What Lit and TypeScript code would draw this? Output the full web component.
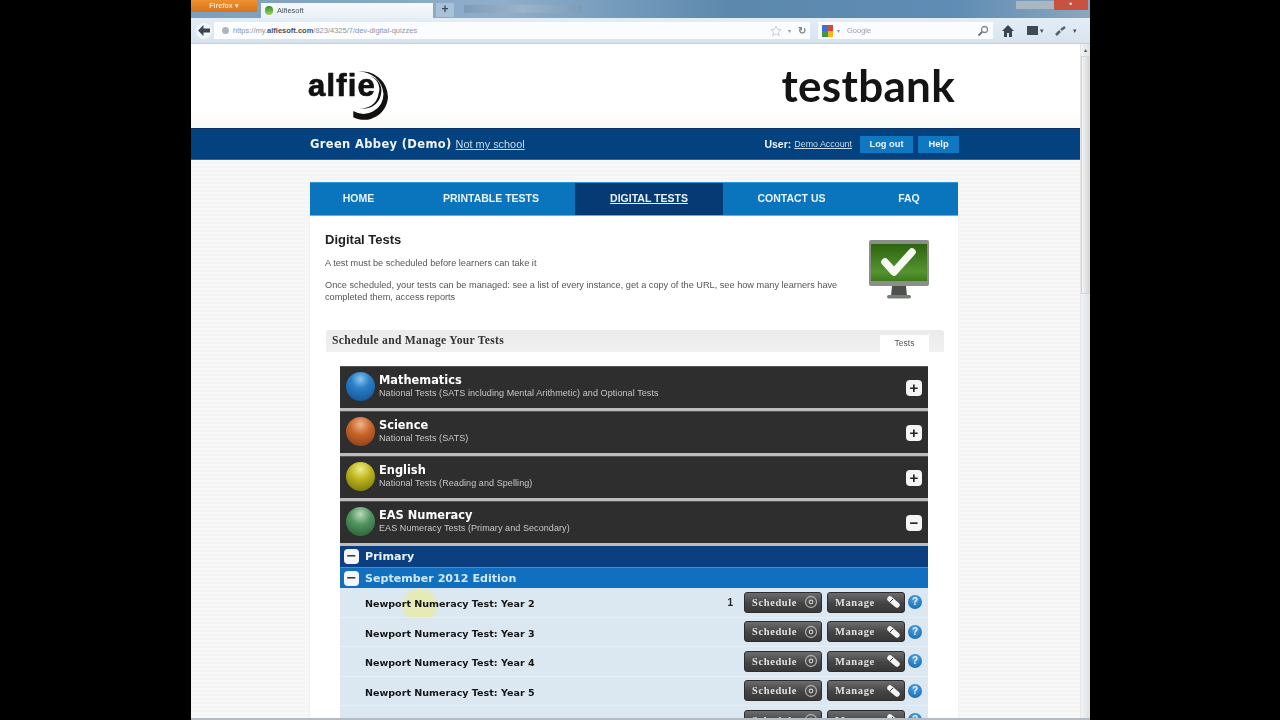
import { LitElement, html, css, svg } from "lit";
import { customElement } from "lit/decorators.js";

const subjects = [
  { name: "Mathematics", sub: "National Tests (SATS including Mental Arithmetic) and Optional Tests", cls: "blue", open: false },
  { name: "Science", sub: "National Tests (SATS)", cls: "orange", open: false },
  { name: "English", sub: "National Tests (Reading and Spelling)", cls: "yellow", open: false },
  { name: "EAS Numeracy", sub: "EAS Numeracy Tests (Primary and Secondary)", cls: "green", open: true },
];
const tests = [2, 3, 4, 5, 6];

const monitor = svg`<svg width="62" height="62" viewBox="0 0 62 62">
  <defs><linearGradient id="scr" x1="0" y1="0" x2="0" y2="1"><stop offset="0" stop-color="#2c6410"/><stop offset=".75" stop-color="#55932f"/><stop offset="1" stop-color="#3c7a1e"/></linearGradient></defs>
  <rect x="1" y="1" width="60" height="46" rx="2" fill="#8b9087"/>
  <rect x="3" y="5" width="56" height="37" fill="url(#scr)"/>
  <path d="M17 23 L26 33 L44 13" fill="none" stroke="#f6f8f2" stroke-width="7.500" stroke-linejoin="round" stroke-linecap="round"/>
  <path d="M24 47h14l1 10H23z" fill="#4c504c"/>
  <rect x="19" y="56" width="24" height="3.500" rx="1.700" fill="#777b76"/>
</svg>`;

const logoSwirl = svg`<svg width="84" height="56" viewBox="0 -6 84 56">
  <text x="0" y="26" font-family="'Liberation Sans',sans-serif" font-weight="700" font-size="31" letter-spacing="1.200" fill="#111" stroke="#111" stroke-width=".7">alfie</text>
  <path d="M50 1.700 A26 26 0 0 1 80 27 A24 24 0 0 1 45.300 47.300 L45.300 41 A20 20 0 0 0 75.500 24 A24 24 0 0 0 50 1.700Z" fill="#111"/>
  <path d="M62 6 A15 15 0 0 1 73 24 A17 17 0 0 1 50 37.500 A16 16 0 0 0 70.500 24 A14 14 0 0 0 62 6Z" fill="#111"/>
</svg>`;

const gear = svg`<svg width="14" height="14" viewBox="0 0 14 14"><circle cx="7" cy="7" r="5.500" fill="none" stroke="#aaa" stroke-width="1.300"/><circle cx="7" cy="7" r="1.800" fill="none" stroke="#ccc" stroke-width="1.200"/></svg>`;
const wrench = svg`<svg width="16" height="14" viewBox="0 0 16 14"><path d="M5 4 L12 10" stroke="#f4f4f4" stroke-width="5.500" stroke-linecap="round"/><path d="M8 4L5 7" stroke="#333" stroke-width="1"/></svg>`;
const back = svg`<svg width="12" height="11" viewBox="0 0 12 11"><path d="M5.500 0L0 5.500 5.500 11V7.500H12v-4H5.500z" fill="#3c4650"/></svg>`;
const home = svg`<svg width="12" height="12" viewBox="0 0 12 12"><path d="M6 0L0 6h2v6h3V8h2v4h3V6h2z" fill="#3b4651"/></svg>`;
const star = svg`<svg width="12" height="12" viewBox="0 0 12 12"><path d="M6 1l1.500 3.400 3.700.3-2.800 2.400.9 3.600L6 8.800 2.700 10.700l.9-3.600L.8 4.700l3.700-.3z" fill="none" stroke="#c8ced4"/></svg>`;
const glass = svg`<svg width="12" height="12" viewBox="0 0 12 12"><circle cx="7.500" cy="4.500" r="3" fill="none" stroke="#7f8a94" stroke-width="1.300"/><path d="M5 7L1.500 10.500" stroke="#6c7780" stroke-width="2"/></svg>`;
const ext = svg`<svg width="12" height="10" viewBox="0 0 12 10"><path d="M1 9L5 5M6 4l4-3" stroke="#56626d" stroke-width="2.500"/></svg>`;

@customElement("app-root")
export class AppRoot extends LitElement {
  static styles = css`
    :host { display: block; width: 1280px; height: 720px; background: #000; overflow: hidden; font-family: "Liberation Sans", Arial, sans-serif; color: #222; }
    .browser { width: 899px; height: 720px; margin-left: 191px; display: flex; flex-direction: column; background: #fff; filter: blur(.45px); }
    .titlebar { height: 18px; flex: none; display: flex; background: linear-gradient(90deg, #7d9ebc 0%, #8eaecb 35%, #5c88ad 60%, #5f8cb4 85%, #8ba7bd 100%); }
    .ff { width: 66px; height: 12px; background: linear-gradient(#f0912f, #d8741c); color: #f6dfc4; font-size: 7px; font-weight: 700; text-align: center; line-height: 11px; }
    .tab { width: 172px; height: 15px; margin: 3px 0 0 4px; background: linear-gradient(#f6f9fb, #e9f0f6); display: flex; align-items: center; gap: 4px; padding-left: 4px; box-sizing: border-box; font-size: 7.500px; color: #45505a; }
    .fav { width: 8px; height: 9px; border-radius: 4px; background: linear-gradient(#2e8f3a, #a4cf52); }
    .plus { width: 18px; height: 14px; margin: 3px 0 0 3px; background: #a9c1d6; color: #3d4c59; font-size: 12px; font-weight: 700; line-height: 13px; text-align: center; }
    .ghost { margin: 5px 0 0 10px; width: 118px; height: 8px; background: linear-gradient(90deg, #7e9cb8, #9db4c9, #7e9cb8); }
    .spacer { flex: 1; }
    .winctl { width: 34px; height: 10px; background: #c8523f; margin-right: 2px; color: #fff; font-size: 8px; line-height: 8px; text-align: center; }
    .winmin { width: 38px; height: 8px; margin-top: 1px; background: #a9b7c2; }
    .toolbar { height: 26px; flex: none; display: flex; align-items: center; background: linear-gradient(#e3edf6, #d7e4f0); border-bottom: 1px solid #c3d0dc; box-sizing: border-box; padding-left: 5px; }
    .backbtn { width: 16px; height: 16px; border-radius: 50%; background: #f3f6f9; display: flex; align-items: center; justify-content: center; flex: none; }
    .url { width: 596px; height: 17px; margin-left: 2px; background: #fbfcfd; display: flex; align-items: center; padding: 0 4px 0 8px; box-sizing: border-box; font-size: 7.500px; color: #8f979e; gap: 4px; }
    .url b { color: #4a5159; font-weight: 700; }
    .globe { width: 7px; height: 7px; border-radius: 50%; background: #aeb6bd; flex: none; }
    .urltext { flex: 1; }
    .arrow { color: #8c97a1; font-size: 6px; margin-left: 2px; }
    .reload { color: #7b8792; font-size: 10px; font-weight: 700; margin-left: 3px; }
    .search { width: 175px; height: 17px; margin-left: 8px; background: #fbfcfd; display: flex; align-items: center; padding: 0 4px; box-sizing: border-box; font-size: 7.500px; color: #9aa1a8; gap: 4px; }
    .g { width: 11px; height: 12px; background: conic-gradient(#d9453a 0 25%, #f1b822 0 50%, #3c9a46 0 75%, #3f6fd0 0); flex: none; }
    .search .arrow { margin: 0 3px 0 0; }
    .tools { display: flex; align-items: center; padding-left: 9px; color: #45505a; font-size: 7px; }
    .box { width: 11px; height: 9px; background: #3f4a55; margin-left: 13px; }
    .tools .tar { margin-left: 2px; }
    .tools .ex { margin-left: 11px; display: flex; }
    .tools .tar2 { margin-left: 6px; }
    .pagewrap { flex: 1; display: flex; min-height: 0; }
    .page { width: 889px; background: repeating-linear-gradient(0deg, #f8f8f8 0 2px, #f5f5f5 2px 4px); overflow: hidden; }
    .sb { width: 10px; flex: none; background: linear-gradient(90deg, #f0f2f4, #dfe2e5); border-left: 1px solid #e6e6e6; box-sizing: border-box; font-size: 6px; line-height: 12px; text-align: center; color: #555; }
    .thumb { height: 236px; background: linear-gradient(90deg, #f3f4f5, #d5d7da); border: 1px solid #d3d5d8; }
    .status { height: 2px; flex: none; background: #b4bbc2; }
    .head { height: 84px; background: linear-gradient(#fff 80%, #f8f8f6); padding: 0 125px 0 117px; display: flex; justify-content: space-between; align-items: flex-start; box-sizing: border-box; }
    .swirl { display: block; margin-top: 20px; }
    .testbank { font-family: "Lato", sans-serif; font-size: 44px; font-weight: 700; color: #141414; letter-spacing: .3px; line-height: 1; margin: 19px 0 0 0; }
    .bar { height: 32px; background: #04427f; border-top: 1px solid #0a3566; border-bottom: 1px solid #2a6aa6; box-sizing: border-box; display: flex; align-items: center; padding: 0 121px 0 119px; color: #eef4f8; }
    .school { font-weight: 700; letter-spacing: .35px; font-family: "DejaVu Sans", sans-serif; font-size: 11.500px; }
    .notme { margin-left: 4px; font-size: 10.900px; text-decoration: underline; color: #c7dcec; }
    .user { margin-left: auto; font-size: 10.500px; font-weight: 700; }
    .acct { margin: 0 8px 0 3px; font-size: 8.900px; color: #c7dcec; text-decoration: underline; }
    .hb { height: 17px; background: #0f78c0; font-size: 9.300px; font-weight: 700; line-height: 16px; text-align: center; color: #eaf4fb; }
    .logout { width: 53px; margin-right: 5px; }
    .help { width: 41px; }
    .col { width: 648px; margin: 22px 0 0 119px; background: #fff; height: 560px; box-shadow: 0 0 0 1px #f2f2f2; }
    nav { height: 34px; display: grid; grid-template-columns: 97px 168px 148px 137px 98px; background: #0a75bd; border-top: 1px solid #2f9ad8; border-bottom: 1px solid #5cb2e6; box-sizing: border-box; font-size: 10.500px; font-weight: 700; color: #e8f3fa; text-align: center; line-height: 31px; }
    nav .on { background: #053a74; text-decoration: underline; }
    .intro { display: flex; padding: 0 28px 0 15px; height: 114px; box-sizing: border-box; }
    .intro-text { width: 520px; padding-top: 16px; }
    h1 { margin: 0; font-size: 13px; line-height: 16px; font-weight: 700; color: #222; }
    p { margin: 10px 0 0; font-size: 9.200px; line-height: 11.500px; color: #555; }
    p + p { margin-top: 10.500px; }
    .mon { margin-left: auto; padding-top: 23px; }
    .panel { margin: 0 14px 0 16px; height: 420px; background: #fff; }
    .phead { height: 22px; background: linear-gradient(#ebebeb, #f1f1f1); display: flex; justify-content: space-between; border-radius: 3px 3px 0 0; padding: 0 15px 0 6px; }
    .ptitle { font-family: "Liberation Serif", serif; font-size: 11.600px; font-weight: 700; line-height: 21px; color: #333; letter-spacing: .3px; }
    .ptab { width: 49px; height: 17px; margin-top: 5px; background: #fff; font-size: 8.500px; color: #555; text-align: center; line-height: 17px; }
    .list { margin: 14px 16px 0 14px; }
    .sub { height: 45px; background: #2e2e2e; box-sizing: border-box; border-bottom: 3px solid #bdbdbd; border-top: 1px solid #555; display: flex; align-items: center; padding: 0 6px 2px 6px; color: #fff; }
    .ball { width: 29px; height: 29px; border-radius: 50%; flex: none; margin-right: 4px; }
    .ball.blue { background: radial-gradient(circle at 50% 25%, #8cc6f0 0, #2a7fc9 35%, #0f4c8b 100%); }
    .ball.orange { background: radial-gradient(circle at 50% 25%, #efb48d 0, #c8652a 40%, #7e3813 100%); }
    .ball.yellow { background: radial-gradient(circle at 50% 25%, #eeee88 0, #bdb51f 40%, #6c680b 100%); }
    .ball.green { background: radial-gradient(circle at 50% 25%, #b6dcb8 0, #529360 40%, #1f5a30 100%); }
    .subtext { flex: 1; min-width: 0; }
    .nm { font-family: "DejaVu Sans", sans-serif; font-size: 11.400px; font-weight: 700; line-height: 14px; margin-top: -3px; }
    .ds { font-size: 9px; line-height: 10px; color: #c8c8c8; letter-spacing: .08px; padding-top: 1px; }
    .toggle { width: 16px; height: 16px; border-radius: 4px; background: #f5f5f5; color: #222; font-size: 15px; font-weight: 700; line-height: 15px; text-align: center; flex: none; margin-top: 3px; }
    .band { display: flex; align-items: center; gap: 6px; padding-left: 4px; font-family: "DejaVu Sans", sans-serif; font-size: 11.100px; font-weight: 700; color: #eaf3fa; box-sizing: border-box; }
    .band.primary { height: 22px; background: #0c3f80; border-bottom: 1px solid #4a90cf; }
    .band.edition { height: 20px; background: #1070bf; color: #d2e8f8; padding-top: 1px; }
    .mini { width: 15px; height: 15px; border-radius: 4px; background: #f4f6f8; color: #333; font-size: 13px; font-weight: 700; line-height: 14px; text-align: center; }
    .row { height: 29.500px; display: flex; align-items: center; background-color: #dce8f1; border-bottom: 1px solid #e6eff6; box-sizing: border-box; padding: 0 6px 0 25px; }
    .row.cursor { background-image: radial-gradient(circle 20px at 80px 18px, #e6eab4 0, #e6eab4 70%, transparent 100%); }
    .rname { flex: 1; font-family: "DejaVu Sans", sans-serif; font-size: 9.550px; font-weight: 700; color: #151515; padding-top: 3px; }
    .count { font-size: 10px; font-weight: 700; color: #222; margin-right: 11px; }
    .btn { width: 78px; height: 21px; border-radius: 3px; background: linear-gradient(#6c6c6c, #444 55%, #383838); border: 1px solid #2d2d2d; box-sizing: border-box; display: flex; align-items: center; justify-content: space-between; padding: 0 3px 0 7px; font-family: "Liberation Serif", serif; font-size: 10.500px; font-weight: 700; letter-spacing: .6px; color: #e0e0e0; }
    .btn + .btn { margin-left: 5px; }
    .q { width: 14px; height: 14px; margin-left: 3px; border-radius: 50%; background: radial-gradient(circle at 50% 30%, #53a7e4, #0c5fa8); color: #e8f4fc; font-size: 10px; font-weight: 700; text-align: center; line-height: 14px; }
  `;

  render() {
    return html`
      <div class="browser">
        <div class="titlebar">
          <div class="ff">Firefox ▾</div>
          <div class="tab"><span class="fav"></span>Alfiesoft</div>
          <div class="plus">+</div>
          <div class="ghost"></div>
          <div class="spacer"></div>
          <div class="winmin"></div>
          <div class="winctl">▪</div>
        </div>
        <div class="toolbar">
          <div class="backbtn">${back}</div>
          <div class="url">
            <span class="globe"></span>
            <span class="urltext">https://my.<b>alfiesoft.com</b>/823/4325/7/dev-digital-quizzes</span>
            ${star}<span class="arrow">▾</span><span class="reload">↻</span>
          </div>
          <div class="search"><span class="g"></span><span class="arrow">▾</span><span class="urltext">Google</span>${glass}</div>
          <div class="tools">${home}<span class="box"></span><span class="tar">▾</span><span class="ex">${ext}</span><span class="tar2">▾</span></div>
        </div>
        <div class="pagewrap">
          <div class="page">
            <div class="head">
              <div class="swirl">${logoSwirl}</div>
              <div class="testbank">testbank</div>
            </div>
            <div class="bar">
              <span class="school">Green Abbey (Demo)</span>
              <span class="notme">Not my school</span>
              <span class="user">User:</span>
              <span class="acct">Demo Account</span>
              <div class="hb logout">Log out</div>
              <div class="hb help">Help</div>
            </div>
            <div class="col">
              <nav>
                <div>HOME</div><div>PRINTABLE TESTS</div><div class="on">DIGITAL TESTS</div><div>CONTACT US</div><div>FAQ</div>
              </nav>
              <div class="intro">
                <div class="intro-text">
                  <h1>Digital Tests</h1>
                  <p>A test must be scheduled before learners can take it</p>
                  <p>Once scheduled, your tests can be managed: see a list of every instance, get a copy of the URL, see how many learners have completed them, access reports</p>
                </div>
                <div class="mon">${monitor}</div>
              </div>
              <div class="panel">
                <div class="phead">
                  <div class="ptitle">Schedule and Manage Your Tests</div>
                  <div class="ptab">Tests</div>
                </div>
                <div class="list">
                  ${subjects.map(s => html`
                    <div class="sub">
                      <div class="ball ${s.cls}"></div>
                      <div class="subtext"><div class="nm">${s.name}</div><div class="ds">${s.sub}</div></div>
                      <div class="toggle">${s.open ? "−" : "+"}</div>
                    </div>`)}
                  <div class="band primary"><span class="mini">−</span>Primary</div>
                  <div class="band edition"><span class="mini">−</span>September 2012 Edition</div>
                  ${tests.map((y, i) => html`
                    <div class="row ${i === 0 ? "cursor" : ""}">
                      <span class="rname">Newport Numeracy Test: Year ${y}</span>
                      ${i === 0 ? html`<span class="count">1</span>` : ""}
                      <div class="btn">Schedule ${gear}</div>
                      <div class="btn">Manage ${wrench}</div>
                      <div class="q">?</div>
                    </div>`)}
                </div>
              </div>
            </div>
          </div>
          <div class="sb">▴<div class="thumb"></div></div>
        </div>
        <div class="status"></div>
      </div>`;
  }
}
